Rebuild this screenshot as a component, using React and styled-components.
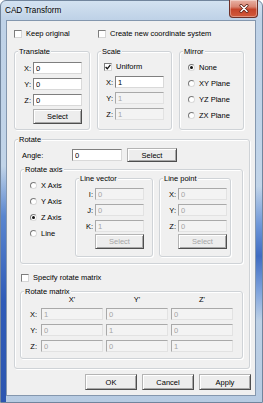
import React from 'react';
import styled, { createGlobalStyle } from 'styled-components';

const GlobalStyle = createGlobalStyle`
  html, body { margin: 0; padding: 0; background: #fff; }
  body {
    font-family: "Liberation Sans", Arial, sans-serif;
    font-size: 7.5px;
    color: #000;
  }
  * { box-sizing: border-box; }
`;

const Window = styled.div`
  width: 263px;
  height: 403px;
  display: flex;
  flex-direction: column;
  border: 1px solid #71859d;
  border-radius: 6px 6px 0 0;
  background:
    linear-gradient(to bottom, transparent 0, transparent 165px, #5a86cf 215px, #2f5bb8 300px, #2c56b0 100%) left top / 5px 100% no-repeat,
    linear-gradient(to bottom, transparent 0, transparent 185px, #6d96d8 225px, #3f6cc2 255px, #7fa3dc 290px, transparent 320px) right top / 6px 100% no-repeat,
    linear-gradient(to bottom, #d3e2f1 0, #bfd2e7 18px, #c2d5e9 60%, #b7cbe2 100%);
`;

const TitleBar = styled.div`
  height: 19px;
  display: flex;
  justify-content: space-between;
  align-items: flex-start;
  padding-left: 4px;
`;

const Title = styled.span`
  font-size: 8.2px;
  line-height: 19px;
  color: #000;
  text-shadow: 0 0 4px rgba(255, 255, 255, 0.9);
`;

const CloseButton = styled.div`
  width: 29px;
  height: 18px;
  margin-top: -1px;
  margin-right: 4px;
  display: flex;
  align-items: center;
  justify-content: center;
  border: 1px solid #6e3027;
  border-top: none;
  border-radius: 0 0 4px 4px;
  background: linear-gradient(to bottom, #e9b3a6 0, #d98572 40%, #c5442a 55%, #d25a3b 100%);
  box-shadow: inset 0 0 0 1px rgba(255, 255, 255, 0.35);
`;

const Client = styled.div`
  flex: 1;
  margin: 0 6px 6px 5px;
  border: 1px solid #8497ae;
  background: #f0f0f0;
  display: flex;
  flex-direction: column;
  padding: 8px 0 0 7px;
`;

const CheckRow = styled.div`
  display: flex;
  align-items: center;
  height: 9px;
  padding-left: ${p => p.$indent || 0}px;
`;

const CheckItem = styled.div`
  display: flex;
  align-items: center;
  gap: 4px;
  width: ${p => (p.$w ? `${p.$w}px` : 'auto')};
  white-space: nowrap;
`;

const Box = styled.span`
  width: 8px;
  height: 8px;
  flex-shrink: 0;
  display: flex;
  align-items: center;
  justify-content: center;
  background: #fff;
  border: 1px solid;
  border-color: #7d7d7d #d6d6d6 #d6d6d6 #7d7d7d;
`;

const GroupRow = styled.div`
  display: flex;
  gap: 7px;
  margin-top: 13px;
`;

const GroupBox = styled.div`
  position: relative;
  flex-shrink: 0;
  width: ${p => p.$w}px;
  height: ${p => p.$h}px;
  margin-top: ${p => p.$mt || 0}px;
  padding: ${p => p.$pad || '0'};
  border: 1px solid #cfd3d7;
  border-radius: 3px;
  box-shadow: inset 1px 1px 0 #fff, 1px 1px 0 #fff;
  display: flex;
  flex-direction: ${p => (p.$row ? 'row' : 'column')};
`;

const Legend = styled.span`
  position: absolute;
  top: -5px;
  left: 3px;
  padding: 0 1px;
  line-height: 9px;
  background: #f0f0f0;
  white-space: nowrap;
`;

const Stack = styled.div`
  display: flex;
  flex-direction: column;
  gap: 4px;
  padding-top: ${p => p.$pt || 0}px;
  padding-left: ${p => p.$pl || 0}px;
  width: ${p => (p.$w ? `${p.$w}px` : 'auto')};
  flex-shrink: 0;
`;

const Field = styled.div`
  display: flex;
  align-items: center;
  height: 12px;
`;

const FieldLabel = styled.span`
  width: ${p => p.$w}px;
  flex-shrink: 0;
  text-align: right;
  padding-right: 2px;
`;

const TextBox = styled.input`
  width: ${p => p.$w}px;
  height: 12px;
  margin: 0;
  padding: 0 0 0 2px;
  font: inherit;
  font-size: 7.5px;
  color: ${p => (p.disabled ? '#a3a3a3' : '#000')};
  background: ${p => (p.disabled ? '#f3f3f3' : '#fff')};
  border: 1px solid;
  border-color: ${p => (p.disabled ? '#a9a9a9 #e2e2e2 #e2e2e2 #a9a9a9' : '#7f7f7f #d9d9d9 #d9d9d9 #7f7f7f')};
  outline: none;
`;

const Button = styled.button`
  width: ${p => p.$w}px;
  height: ${p => p.$h || 16}px;
  margin: ${p => p.$m || 0};
  padding: 0;
  flex-shrink: 0;
  font: inherit;
  font-size: 7.5px;
  color: ${p => (p.disabled ? '#a6a6a6' : '#000')};
  background: #ededed;
  border: 1px solid;
  border-color: #b4b4b4 #4e4e4e #4e4e4e #b4b4b4;
  box-shadow: inset 1px 1px 0 #fff, inset -1px -1px 0 #a8a8a8;
`;

const RadioRow = styled.div`
  display: flex;
  align-items: center;
  gap: 4px;
  height: 12px;
`;

const RadioCircle = styled.span`
  width: 7px;
  height: 7px;
  flex-shrink: 0;
  border-radius: 50%;
  background: #fff;
  border: 1px solid;
  border-color: #7a7a7a #dadada #dadada #7a7a7a;
  display: flex;
  align-items: center;
  justify-content: center;

  &::after {
    content: '';
    width: 3px;
    height: 3px;
    border-radius: 50%;
    background: ${p => (p.$on ? '#111' : 'transparent')};
  }
`;

const AngleRow = styled.div`
  display: flex;
  align-items: center;
  height: 14px;
  padding-left: 2px;
`;

const AngleLabel = styled.span`
  width: 50px;
`;

const MatrixGrid = styled.div`
  display: grid;
  grid-template-columns: 17px repeat(3, 62px);
  grid-template-rows: 8px repeat(3, 12px);
  column-gap: 3px;
  row-gap: 4px;
  padding-top: 4px;
  align-items: center;
`;

const ColHead = styled.span`
  text-align: center;
  line-height: 8px;
`;

const RowHead = styled.span`
  text-align: right;
  padding-right: 1px;
`;

const ButtonRow = styled.div`
  display: flex;
  justify-content: flex-end;
  gap: 5px;
  margin-top: 5px;
  padding-right: 4px;
`;

function Check({ label, checked, w }) {
  return (
    <CheckItem $w={w}>
      <Box>
        {checked && (
          <svg width="6" height="6" viewBox="0 0 6 6">
            <path d="M0.6 3 L2.3 4.8 L5.4 0.8" fill="none" stroke="#111" strokeWidth="1.3" />
          </svg>
        )}
      </Box>
      <span>{label}</span>
    </CheckItem>
  );
}

function Radio({ label, on }) {
  return (
    <RadioRow>
      <RadioCircle $on={on} />
      <span>{label}</span>
    </RadioRow>
  );
}

function Row({ label, value, lw, iw = 49, disabled }) {
  return (
    <Field>
      <FieldLabel $w={lw}>{label}</FieldLabel>
      <TextBox $w={iw} defaultValue={value} disabled={disabled} readOnly />
    </Field>
  );
}

const matrix = [
  ['X:', '1', '0', '0'],
  ['Y:', '0', '1', '0'],
  ['Z:', '0', '0', '1'],
];

export default function App() {
  return (
    <>
      <GlobalStyle />
      <Window>
        <TitleBar>
          <Title>CAD Transform</Title>
          <CloseButton>
            <svg width="10" height="9" viewBox="0 0 10 9">
              <path d="M2 1.5 L8 7.5 M8 1.5 L2 7.5" stroke="#5a1e14" strokeWidth="3" strokeLinecap="round" />
              <path d="M2 1.5 L8 7.5 M8 1.5 L2 7.5" stroke="#fff" strokeWidth="1.5" strokeLinecap="round" />
            </svg>
          </CloseButton>
        </TitleBar>

        <Client>
          <CheckRow>
            <Check label="Keep original" w={84} />
            <Check label="Create new coordinate system" />
          </CheckRow>

          <GroupRow>
            <GroupBox $w={76} $h={79} $pad="10px 0 0 0">
              <Legend>Translate</Legend>
              <Stack>
                <Row label="X:" value="0" lw={18} />
                <Row label="Y:" value="0" lw={18} />
                <Row label="Z:" value="0" lw={18} />
              </Stack>
              <Button $w={49} $h={15} $m="3px 0 0 18px">Select</Button>
            </GroupBox>

            <GroupBox $w={75} $h={79} $pad="10px 0 0 6px">
              <Legend>Scale</Legend>
              <CheckRow>
                <Check label="Uniform" checked />
              </CheckRow>
              <Stack $pt={5}>
                <Row label="X:" value="1" lw={11} />
                <Row label="Y:" value="1" lw={11} disabled />
                <Row label="Z:" value="1" lw={11} disabled />
              </Stack>
            </GroupBox>

            <GroupBox $w={65} $h={79} $pad="9px 0 0 8px">
              <Legend>Mirror</Legend>
              <Stack>
                <Radio label="None" on />
                <Radio label="XY Plane" />
                <Radio label="YZ Plane" />
                <Radio label="ZX Plane" />
              </Stack>
            </GroupBox>
          </GroupRow>

          <GroupBox $w={236} $h={230} $mt={9} $pad="8px 0 0 5px">
            <Legend>Rotate</Legend>
            <AngleRow>
              <AngleLabel>Angle:</AngleLabel>
              <TextBox $w={50} defaultValue="0" readOnly />
              <Button $w={50} $h={14} $m="0 0 0 5px">Select</Button>
            </AngleRow>

            <GroupBox $w={223} $h={95} $mt={7} $pad="8px 0 0 0" $row>
              <Legend>Rotate axis</Legend>
              <Stack $w={54} $pl={9} $pt={1}>
                <Radio label="X Axis" />
                <Radio label="Y Axis" />
                <Radio label="Z Axis" on />
                <Radio label="Line" />
              </Stack>

              <GroupBox $w={78} $h={79} $pad="9px 0 0 0">
                <Legend>Line vector</Legend>
                <Stack>
                  <Row label="I:" value="0" lw={19} disabled />
                  <Row label="J:" value="0" lw={19} disabled />
                  <Row label="K:" value="1" lw={19} disabled />
                </Stack>
                <Button $w={49} $h={15} $m="2px 0 0 19px" disabled>Select</Button>
              </GroupBox>

              <GroupBox $w={72} $h={79} $mt={0} $pad="9px 0 0 0" style={{ marginLeft: 6 }}>
                <Legend>Line point</Legend>
                <Stack>
                  <Row label="X:" value="0" lw={18} disabled />
                  <Row label="Y:" value="0" lw={18} disabled />
                  <Row label="Z:" value="0" lw={18} disabled />
                </Stack>
                <Button $w={49} $h={15} $m="2px 0 0 18px" disabled>Select</Button>
              </GroupBox>
            </GroupBox>

            <CheckRow $indent={1} style={{ marginTop: 9 }}>
              <Check label="Specify rotate matrix" />
            </CheckRow>

            <GroupBox $w={223} $h={68} $mt={9}>
              <Legend>Rotate matrix</Legend>
              <MatrixGrid>
                <span />
                <ColHead>X'</ColHead>
                <ColHead>Y'</ColHead>
                <ColHead>Z'</ColHead>
                {matrix.map(r => (
                  <React.Fragment key={r[0]}>
                    <RowHead>{r[0]}</RowHead>
                    <TextBox $w={62} defaultValue={r[1]} disabled readOnly />
                    <TextBox $w={62} defaultValue={r[2]} disabled readOnly />
                    <TextBox $w={62} defaultValue={r[3]} disabled readOnly />
                  </React.Fragment>
                ))}
              </MatrixGrid>
            </GroupBox>
          </GroupBox>

          <ButtonRow>
            <Button $w={52}>OK</Button>
            <Button $w={52}>Cancel</Button>
            <Button $w={52}>Apply</Button>
          </ButtonRow>
        </Client>
      </Window>
    </>
  );
}
